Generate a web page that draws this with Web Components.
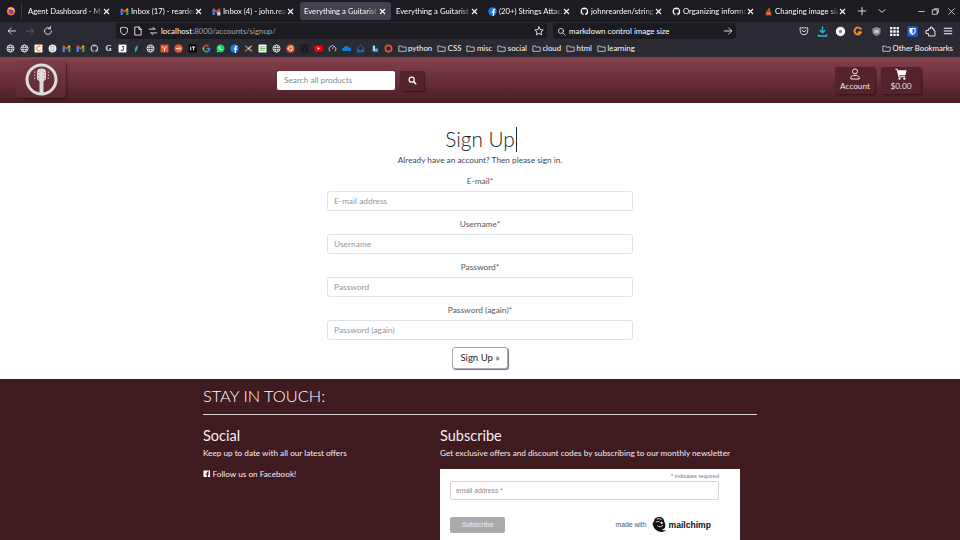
<!DOCTYPE html>
<html lang="en"><head><meta charset="utf-8"><title>Sign Up</title>
<style>
html,body{margin:0;padding:0;width:960px;height:540px;overflow:hidden;background:#fff}
body{font-family:Lato,"Noto Sans",sans-serif}
</style></head><body>
<browser-frame></browser-frame>
<site-header></site-header>
<signup-page></signup-page>
<site-footer></site-footer>
<script>
const GH='M8 1a7 7 0 0 0-2.200 13.600c.4 0 .5-.1.5-.3v-1.400c-2 .4-2.400-.9-2.400-.9-.3-.8-.8-1-.8-1-.6-.4 0-.4 0-.4.7 0 1.100.7 1.100.7.600 1.100 1.600.8 2 .6 0-.5.200-.8.400-1-1.600-.2-3.200-.8-3.200-3.400 0-.8.300-1.400.700-1.900-.100-.2-.300-.9.100-1.900 0 0 .600-.2 1.900.7a6.500 6.500 0 0 1 3.500 0c1.300-.9 1.900-.7 1.900-.7.400 1 .100 1.700.100 1.900.400.500.700 1.100.700 1.900 0 2.700-1.600 3.200-3.200 3.400.300.200.500.700.500 1.300v2c0 .200.100.300.500.300A7 7 0 0 0 8 1z';
const ICONS={
globe:'<circle cx="8" cy="8" r="6.300" fill="none" stroke="#fbfbfe" stroke-width="1.400"/><ellipse cx="8" cy="8" rx="2.800" ry="6.300" fill="none" stroke="#fbfbfe" stroke-width="1.200"/><path d="M2 6h12M2 10h12" stroke="#fbfbfe" stroke-width="1.200"/>',
gmail:'<path d="M1 14V4l2-1.500 2 1.500v10z" fill="#4285f4"/><path d="M11 14V4l2-1.500L15 4v10z" fill="#34a853"/><path d="M1 4l2-2 5 4 5-4 2 2-7 6z" fill="#ea4335"/><path d="M13 2l2 2-4 3V4z" fill="#fbbc04"/>',
gmail2:'<path d="M1 14V4l2-1.500 2 1.500v10z" fill="#4285f4"/><path d="M1 4l2-2 5 4 5-4 2 2-7 6z" fill="#ea4335"/><path d="M11 14V7l4-3v4z" fill="#34a853"/><rect x="9" y="9" width="6" height="6" fill="#ccd"/>',
ghw:`<path d="${GH}" fill="#fbfbfe"/>`,
ghg:`<path d="${GH}" fill="#bbb"/>`,
fb:'<circle cx="8" cy="8" r="7.500" fill="#1a78e8"/><path d="M10.800 16V10h1.700l.3-2.200h-2V6.500c0-.7.200-1.100 1.100-1.100h1V3.300c-1.900-.3-4.300-.4-4.400 2.800v1.700H6.800V10h1.700v6z" fill="#fff"/>',
ff:'<circle cx="8" cy="8.500" r="6.500" fill="#ff7139"/><circle cx="8.500" cy="9" r="3.600" fill="#7b3fd0"/><path d="M3 3c1 2 3 2 5 2s5 2 5.500 5c.8-3-.8-7-5-8-2 0-4 .5-5.500 1z" fill="#ffbd4f"/>',
so:'<path d="M3 15h10V9l-2-2V3L8 1 7 5 3 9z" fill="#b5502f"/><path d="M5 11h6v1.500H5z" fill="#e0b090"/>',
cbox:'<rect x="1" y="1" width="14" height="14" fill="#fff"/><path d="M11.500 5A4 4 0 1 0 11.500 11" fill="none" stroke="#f39325" stroke-width="2.400"/>',
lc:'<circle cx="8" cy="8" r="7" fill="#e8eeee"/><path d="M5 4h6v8H5z" fill="#7fb7b5"/><path d="M6.500 5.500h3v5h-3z" fill="#fff"/>',
gn:'<text x="8" y="13" text-anchor="middle" font-family="Liberation Serif" font-weight="700" font-size="14" fill="#dfe7f5">G</text>',
j:'<rect x="1" y="1" width="14" height="14" fill="#fff"/><text x="8" y="13" text-anchor="middle" font-family="Liberation Sans" font-weight="700" font-size="12" fill="#1f3c9c">J</text>',
feather:'<rect x="2" y="1" width="12" height="14" rx="5" fill="#13303f"/><path d="M10 2C6 4 5 8 5 13l1 1c3-3 5-7 4-12z" fill="#7b93a0"/>',
y:'<rect x="1" y="1" width="14" height="14" fill="#f4511e"/><path d="M4 4l4 5 4-5M8 9v4" fill="none" stroke="#fff" stroke-width="1.500"/>',
orng:'<circle cx="8" cy="8" r="7.500" fill="#e8562a"/><path d="M4 7h3v2H4zM8 6h1.500v4H8zM10.500 6H12v4h-1.500z" fill="#fff"/>',
it:'<rect x="1" y="1" width="14" height="14" fill="#000"/><path d="M4 4.500h1.800v7H4zM7 4.500h6V6h-2.100v5.500H9.100V6H7z" fill="#fff"/>',
goog:'<path d="M14.800 8.200c0-.5 0-1-.1-1.400H8v2.700h3.800a3.300 3.300 0 0 1-1.400 2.100l2.200 1.700c1.300-1.200 2.200-3 2.200-5.100z" fill="#4285f4"/><path d="M8 15c1.900 0 3.400-.6 4.600-1.700l-2.200-1.700c-.6.400-1.400.7-2.400.7-1.800 0-3.400-1.300-3.900-2.900L1.800 11.100A7 7 0 0 0 8 15z" fill="#34a853"/><path d="M4.100 9.400a4.200 4.200 0 0 1 0-2.800L1.800 4.900a7 7 0 0 0 0 6.200z" fill="#fbbc04"/><path d="M8 3.800c1 0 1.900.4 2.700 1l2-2A7 7 0 0 0 1.800 4.900l2.300 1.700C4.600 5 6.200 3.800 8 3.800z" fill="#ea4335"/>',
wa:'<path d="M1 15l1-3.700A7 7 0 1 1 4.800 14z" fill="#25d366"/><path d="M5.500 4.500c-1 1-1 2.700.7 4.600 1.800 2 3.600 2.500 4.700 1.600.5-.4.700-1 .5-1.300L10 9c-.4.500-.7.700-1.100.5C8 9 7 8 6.600 7c-.1-.4.200-.7.600-1L6.600 4.500c-.3-.3-.8-.3-1.100 0z" fill="#fff"/>',
joom:'<path d="M2 3l6 5" stroke="#5091cd" stroke-width="2.500"/><path d="M14 3L8 8" stroke="#e8a33d" stroke-width="2.500"/><path d="M14 13L8 8" stroke="#7ac143" stroke-width="2.500"/><path d="M2 13l6-5" stroke="#d9534f" stroke-width="2.500"/><circle cx="8" cy="8" r="1.500" fill="#ddd"/>',
sheet:'<rect x="1" y="1" width="14" height="14" fill="#fff"/><path d="M3 5h10M3 8h10M3 11h10" stroke="#4caf50" stroke-width="1.500"/><path d="M5 5v6" stroke="#f5a623" stroke-width="1.500"/>',
ubu:'<circle cx="8" cy="8" r="7.500" fill="#e95420"/><circle cx="8" cy="8" r="3.500" fill="none" stroke="#fff" stroke-width="1.500"/><circle cx="3.500" cy="8" r="1.100" fill="#fff"/><circle cx="10.500" cy="4" r="1.100" fill="#fff"/><circle cx="10.500" cy="12" r="1.100" fill="#fff"/>',
blk:'<rect x="1" y="1" width="14" height="14" fill="#101014"/><path d="M3 3h10v10H3zM3 7h10M8 7v6" fill="none" stroke="#33333b" stroke-width="1.200"/>',
yt:'<rect x="0.500" y="2.500" width="15" height="11" rx="3" fill="#f00"/><path d="M6.500 5.500v5l4-2.500z" fill="#fff"/>',
gauge:'<path d="M3.500 13A6 6 0 1 1 12.500 13" fill="none" stroke="#cfd3e0" stroke-width="1.500"/><path d="M8 9l1.500-4" stroke="#cfd3e0" stroke-width="1.400"/>',
od:'<path d="M3.500 12.500a3 3 0 0 1-.4-6A4.500 4.500 0 0 1 11.500 6a3.300 3.300 0 0 1 2.500 6.500z" fill="#0a84d8"/>',
mail:'<path d="M2 7l6-5 6 5v7H2z" fill="none" stroke="#1c6ab5" stroke-width="1.500"/><path d="M2 8l6 3.500L14 8v6H2z" fill="#1c6ab5"/>',
pic:'<rect x="1" y="1" width="14" height="14" fill="#0f3a55"/><path d="M5 3h4v10H5z" fill="#bcd3de"/><path d="M9 8h5v6H9z" fill="#5ea6c6"/>',
ring:'<circle cx="8" cy="8" r="5.500" fill="none" stroke="#f0501e" stroke-width="3"/>'
};
const TOOLS={
plus:'<path d="M8 2v12M2 8h12"/>',
chev:'<path d="M3 6l5 4 5-4"/>',
min:'<path d="M3 8h10"/>',
rest:'<path d="M3 5h8v8H3zM6 5V3h7v7h-2"/>',
close:'<path d="M3 3l10 10M13 3L3 13"/>',
back:'<path d="M14 8H2M7 3L2 8l5 5"/>',
fwd:'<path d="M2 8h12M9 3l5 5-5 5"/>',
reload:'<path d="M13.500 8A5.500 5.500 0 1 1 11.500 3.800M12 1v3.500H8.500"/>',
shield:'<path d="M8 2l5.500 1.500v4c0 3.500-2.500 5.500-5.500 6.500-3-1-5.500-3-5.500-6.500v-4z"/>',
page:'<path d="M3.500 1.500H10L13 5v9.500H3.500zM9.500 1.500V5.500H13"/>',
perm:'<path d="M2 5h9M8 2l3 3M14 11H5M8 14l-3-3"/>',
star:'<path d="M8 1.500l2 4.300 4.700.5-3.500 3.200 1 4.700L8 11.800l-4.200 2.400 1-4.700L1.300 6.300 6 5.800z"/>',
search:'<circle cx="7" cy="7" r="4.500"/><path d="M10.500 10.500l4 4"/>',
pocket:'<path d="M2 3h12v5a6 6 0 0 1-12 0z"/><path d="M5 7l3 2.500L11 7"/>',
dl:'<path d="M8 1.500v8M4.500 6.500L8 10l3.500-3.500M2 13v1.500h12V13" stroke-width="2"/>',
disc:'<circle cx="8" cy="8" r="6.800" fill="#fbfbfe" stroke="none"/><circle cx="8" cy="8" r="2.200" fill="#777" stroke="none"/>',
gram:'<path d="M12.500 5A5.500 5.500 0 1 0 13 10H9" stroke-width="3"/>',
sh:'<path d="M8 1.500l6 2v5c0 3-2.500 5-6 6-3.500-1-6-3-6-6v-5z" fill="#8b8b8f" stroke="none"/><path d="M5 6h6v4H5z" fill="#cfcfd2" stroke="none"/>',
grid:'<path d="M1.500 1.500h3.400v3.400H1.500zM6.300 1.500h3.400v3.400H6.300zM11.100 1.500h3.400v3.400h-3.400zM1.500 6.300h3.400v3.400H1.500zM6.300 6.300h3.400v3.400H6.300zM11.100 6.300h3.400v3.400h-3.400zM1.500 11.100h3.400v3.400H1.500zM6.300 11.100h3.400v3.400H6.300zM11.100 11.100h3.400v3.400h-3.400z" fill="#fbfbfe" stroke="none"/>',
bw:'<rect x="0.500" y="0.500" width="15" height="15" rx="1" fill="#175ddc" stroke="none"/><path d="M3.500 3h9v5.500c0 2.200-2.300 3.500-4.500 4.700C5.800 12 3.500 10.700 3.500 8.500z" fill="#fff" stroke="none"/><path d="M8 4.500h3v4c0 1.200-1.500 2.100-3 3z" fill="#175ddc" stroke="none"/>',
ext:'<path d="M2 6.500h3V4h3V1.500h2.500V4H13v3h1.500v7.500H5V11H2z"/>',
menu:'<path d="M2 3.500h12M2 8h12M2 12.500h12" stroke-width="1.700"/>'
};
function def(name,html,init){customElements.define(name,class extends HTMLElement{connectedCallback(){if(this.shadowRoot)return;const r=this.attachShadow({mode:'open'});r.innerHTML=typeof html==='function'?html(this):html;init&&init(r,this);}});}

def('fav-icon',h=>`<style>:host{display:inline-flex;width:${h.getAttribute('size')||9}px;height:${h.getAttribute('size')||9}px;flex:none}svg{width:100%;height:100%;display:block}</style><svg viewBox="0 0 16 16">${ICONS[h.getAttribute('name')]}</svg>`);

def('tool-icon',h=>`<style>:host{display:flex;align-items:center;justify-content:center;width:${h.getAttribute('w')||18}px;height:18px;flex:none}svg{width:${h.getAttribute('s')||10}px;height:${h.getAttribute('s')||10}px;display:block;fill:none;stroke:${h.getAttribute('c')||'#fbfbfe'};stroke-width:1.300;stroke-linecap:round;stroke-linejoin:round}</style><svg viewBox="0 0 16 16">${TOOLS[h.getAttribute('name')]}</svg>`);

def('browser-tab',h=>`<style>
:host{display:block;width:92px;height:18px;flex:none}
.b{display:flex;align-items:center;width:90.500px;height:18px;border-radius:3px;box-sizing:border-box;padding:0 5px 0 4px;color:#fbfbfe;font:7.700px/18px Lato,"Noto Sans",sans-serif;${h.hasAttribute('active')?'background:#42414d;':''}}
fav-icon{margin-right:2px}
.t{flex:1;min-width:0;white-space:nowrap;-webkit-mask-image:linear-gradient(90deg,#000 85%,rgba(0,0,0,.15));mask-image:linear-gradient(90deg,#000 85%,rgba(0,0,0,.15))}
svg{width:7px;height:7px;flex:none;stroke:#fbfbfe;stroke-width:1.100;margin-left:1px}
</style><div class="b">${h.hasAttribute('icon')?`<fav-icon name="${h.getAttribute('icon')}" size="9"></fav-icon>`:''}<span class="t">${h.getAttribute('label')}</span><svg viewBox="0 0 7 7"><path d="M1 1l5 5M6 1L1 6"/></svg></div>`);

def('bm-folder',h=>`<style>:host{display:flex;align-items:center;gap:1.500px;flex:none;color:#fbfbfe;font:7.800px/17px Lato,"Noto Sans",sans-serif}svg{width:9px;height:9px;fill:none;stroke:#fbfbfe;stroke-width:1.200;flex:none}</style><svg viewBox="0 0 16 16"><path d="M1.500 13V3.500h4.500l1.500 2H14.500V13z"/></svg><span>${h.textContent}</span>`);

def('browser-frame',`<style>
:host{display:block;background:#2b2a33;height:57px;overflow:hidden}
.tabs{height:22px;background:#1c1b22;display:flex;align-items:center;color:#fbfbfe}
.ff{width:21px;display:flex;justify-content:center;flex:none}
.sep{width:1px;height:16px;background:#3a3944;margin-right:2px;flex:none}
.list{display:flex;flex:none;width:828px}
.nav{height:18px;display:flex;align-items:center;padding-left:3px}
.url,.srch{height:16px;background:#1c1b22;border-radius:3px;display:flex;align-items:center;color:#fbfbfe;font:7.900px/16px Lato,"Noto Sans",sans-serif;flex:none;box-sizing:border-box}
.url{width:431px;margin-left:59px}
.url .h{margin-left:1px}.url i{font-style:normal;color:#a5a4ad}
.srch{width:183px;margin-left:6px}
.grow{flex:1}
.bm{height:17px;display:flex;align-items:center;padding-left:5.500px;gap:0 5px}
.right{display:flex;margin-left:59px}
</style>
<div class="tabs"><div class="ff"><fav-icon name="ff" size="10"></fav-icon></div><div class="sep"></div>
<div class="list">
<browser-tab label="Agent Dashboard - My"></browser-tab>
<browser-tab icon="gmail" label="Inbox (17) - rearden"></browser-tab>
<browser-tab icon="gmail2" label="Inbox (4) - john.rear"></browser-tab>
<browser-tab active label="Everything a Guitarist"></browser-tab>
<browser-tab label="Everything a Guitarist"></browser-tab>
<browser-tab icon="fb" label="(20+) Strings Attacl"></browser-tab>
<browser-tab icon="ghw" label="johnrearden/string"></browser-tab>
<browser-tab icon="ghw" label="Organizing informa"></browser-tab>
<browser-tab icon="so" label="Changing image siz"></browser-tab>
</div>
<tool-icon name="plus" w="20"></tool-icon>
<tool-icon name="chev" w="20"></tool-icon>
<span style="width:28px"></span>
<tool-icon name="min" w="14" s="9"></tool-icon>
<tool-icon name="rest" w="14" s="9"></tool-icon>
<tool-icon name="close" w="18" s="9"></tool-icon>
</div>
<div class="nav">
<tool-icon name="back"></tool-icon>
<tool-icon name="fwd" c="#6a6973"></tool-icon>
<tool-icon name="reload"></tool-icon>
<div class="url">
<tool-icon name="shield" w="15"></tool-icon>
<tool-icon name="page" w="14"></tool-icon>
<tool-icon name="perm" w="15"></tool-icon>
<span class="h"><b style="font-weight:400;color:#fff">localhost</b><i>:8000/accounts/signup/</i></span>
<span class="grow"></span>
<tool-icon name="star" w="14"></tool-icon><span style="width:1px"></span>
</div>
<div class="srch"><tool-icon name="search" w="16" s="9"></tool-icon><span>markdown control image size</span><span class="grow"></span><tool-icon name="fwd" w="16"></tool-icon></div>
<div class="right">
<tool-icon name="pocket"></tool-icon>
<tool-icon name="dl" c="#31b8d9" s="11"></tool-icon>
<tool-icon name="disc" s="11"></tool-icon>
<tool-icon name="gram" c="#f18a2b" s="10"></tool-icon>
<tool-icon name="sh" s="11"></tool-icon>
<tool-icon name="grid" s="11"></tool-icon>
<tool-icon name="bw" s="11"></tool-icon>
<tool-icon name="ext" s="11"></tool-icon>
<tool-icon name="menu"></tool-icon>
</div>
</div>
<div class="bm" id="bm"></div>`,r=>{
const names=['globe','globe','cbox','lc','gmail','gmail','ghg','gn','j','feather','globe','y','orng','it','goog','wa','fb','joom','sheet','globe','ubu','blk','yt','gauge','od','mail','pic','ring'];
r.getElementById('bm').innerHTML=names.map(n=>`<fav-icon name="${n}" size="9"></fav-icon>`).join('')+['python','CSS','misc','social','cloud','html','learning'].map(t=>`<bm-folder>${t}</bm-folder>`).join('')+`<span class="grow"></span><bm-folder>Other Bookmarks</bm-folder><span style="width:2px"></span>`;
});

def('site-header',`<style>
:host{display:grid;grid-template-columns:277px 1fr auto;align-items:center;height:46px;background:linear-gradient(#85414c,#4b1d26);font-family:Lato,"Noto Sans",sans-serif;color:#fff}
.logo{width:50px;height:37px;margin:0 0 1px 16px;border-radius:3px;background:linear-gradient(#7a3a45,#5a2730);box-shadow:1px 1px 2px rgba(30,0,0,.55);display:flex;align-items:center;justify-content:center}
.logo svg{width:33px;height:33px}
.s{display:flex;gap:5px;align-items:center;margin-top:1px}
.inp{width:118px;height:19px;background:#fff;border-radius:2px;box-sizing:border-box;padding-left:7px;font-size:8.250px;line-height:19px;color:#858b92}
.btn{background:#54232c;border-radius:2px;box-shadow:1px 1px 2px rgba(30,0,0,.6);display:flex;flex-direction:column;align-items:center;justify-content:center}
.sb{width:24px;height:20px}
.sb svg{width:9px;height:9px}
.acts{display:flex;gap:6px;padding-right:39px}
.a{width:40px;height:27px;box-sizing:border-box;padding-bottom:1px;font-size:8.200px;line-height:10px;color:#f1e6e8}
.a svg{width:12px;height:12px;margin-bottom:1px;display:block}
</style>
<div class="logo"><svg viewBox="0 0 33 33"><circle cx="16.500" cy="16.500" r="14.500" fill="none" stroke="#dcdcdc" stroke-width="3"/><path d="M14.500 31V18.500L12 16V8.500C12 6.500 14 5.500 16.500 5.500S21 6.500 21 8.500V16L18.500 18.500V31z" fill="#dcdcdc"/><path d="M9 8.500h1.300v1.300H9zM9 11.500h1.300v1.300H9zM9 14.500h1.300v1.300H9zM22.700 8.500H24v1.300h-1.300zM22.700 11.500H24v1.300h-1.300zM22.700 14.500H24v1.300h-1.300z" fill="#c9b8b8"/><path d="M13 9h1.200v1H13zM13 12h1.200v1H13zM13 15h1.200v1H13zM18.800 9H20v1h-1.200zM18.800 12H20v1h-1.200zM18.800 15H20v1h-1.200z" fill="#a08a8a"/></svg></div>
<div class="s"><div class="inp">Search all products</div><div class="btn sb"><svg viewBox="0 0 16 16"><circle cx="6.500" cy="6.500" r="4.500" fill="none" stroke="#fff" stroke-width="2.200"/><path d="M10 10l4.500 4.500" stroke="#fff" stroke-width="2.600"/></svg></div></div>
<div class="acts">
<div class="btn a"><svg viewBox="0 0 16 16" fill="none" stroke="#f1e6e8" stroke-width="1.300"><circle cx="8" cy="4.500" r="3.300"/><path d="M2.500 14.700v-1.500c0-2 1.500-3.200 3.200-3.200h4.600c1.700 0 3.200 1.200 3.200 3.200v1.500z"/></svg>Account</div>
<div class="btn a"><svg viewBox="0 0 16 16" fill="#fff"><path d="M.5 1h2.800l.5 2H15.500l-1.700 6.500H5.500l.4 1.500H13.500v1.300H4.800L2.300 2.300H.5z"/><circle cx="6" cy="14.300" r="1.500"/><circle cx="12.500" cy="14.300" r="1.500"/></svg>$0.00</div>
</div>`);

def('form-field',h=>`<style>:host{display:block;height:43px;text-align:center;font-size:8.400px;color:#54585d}
.l{height:15px;line-height:10px}
.i{height:20px;border:1px solid #dee2e6;border-radius:3px;box-sizing:border-box;text-align:left;padding-left:6px;line-height:18px;color:#92979d}</style><div class="l">${h.getAttribute('label')}*</div><div class="i">${h.getAttribute('ph')}</div>`);

def('signup-page',`<style>
:host{display:flex;flex-direction:column;align-items:center;height:276px;background:#fff;font-family:Lato,"Noto Sans",sans-serif;box-sizing:border-box;padding-top:22px}
h1{margin:0;font-weight:300;font-size:20.800px;line-height:28px;height:28px;color:#22262a;white-space:nowrap}
.c{display:inline-block;width:1px;height:25px;background:#1e2a33;vertical-align:-5px;margin-right:-2px;margin-left:1px}
p{margin:0;font-size:8.250px;line-height:14px;color:#44484d}
form{width:306px;margin-top:9px;display:flex;flex-direction:column}
.b{align-self:center;width:56px;height:22px;box-sizing:border-box;margin-top:-1px;border:1px solid #a8a8a8;border-radius:3px;box-shadow:1px 1px 1px #777;background:#fff;font-size:9.600px;line-height:20px;text-align:center;color:#2f2528}
</style>
<h1>Sign Up<span class="c"></span></h1>
<p>Already have an account? Then please sign in.</p>
<form>
<form-field label="E-mail" ph="E-mail address"></form-field>
<form-field label="Username" ph="Username"></form-field>
<form-field label="Password" ph="Password"></form-field>
<form-field label="Password (again)" ph="Password (again)"></form-field>
<div class="b">Sign Up »</div>
</form>`);

def('mc-embed',`<style>
:host{display:block;width:300px;height:71px;background:#fff;box-sizing:border-box;padding:3px 21px 0 10px;font-family:"Liberation Sans",Arial,sans-serif;overflow:hidden}
.r{text-align:right;font-size:5.600px;line-height:8px;color:#777}.r b{color:#e85c41;font-weight:400}
.i{height:19px;border:1px solid #d4d4d4;border-radius:2px;box-sizing:border-box;padding-left:5px;font-size:6.800px;line-height:17px;color:#8a8a8a;margin-top:1px}
.f{display:flex;align-items:center;margin-top:16px}
.s{width:55px;height:16px;background:#aaa;border-radius:2px;color:#eee;font-size:7.200px;line-height:16px;text-align:center}
.g{flex:1}
.m{font-size:6.800px;color:#555}
svg{width:17px;height:17px;margin-left:5px}
.n{font:700 8.600px/16px "Liberation Sans",Arial,sans-serif;color:#111;margin-right:8px}
</style>
<div class="r"><b>*</b> indicates required</div>
<div class="i">email address *</div>
<div class="f"><div class="s">Subscribe</div><div class="g"></div><span class="m">made with</span>
<svg viewBox="0 0 16 16"><path d="M7.500 1C4 1.500 3 3 3 5c-1.500 1-2 3-.8 4.500C3 12.500 6 15 10 15c2 0 3.500-.8 4-2-1.500.5-3 .5-4-.3 2 0 3.500-1.300 3.500-3.700 0-1.500-.5-2.500-1-3.500C12.500 3 10.500 1 7.500 1z" fill="#111"/><path d="M5.500 3c1.500-.8 3-.5 4.500.5M4.500 6c1-1 2.500-1 3.500-.5M6 9c1.500 1.500 4 1.500 5.500-.5" fill="none" stroke="#fff" stroke-width=".8"/><circle cx="10" cy="6.500" r="1" fill="#fff"/></svg>
<span class="n">mailchimp</span></div>`);

def('site-footer',`<style>
:host{display:block;height:161px;overflow:hidden;background:#3f1b20;color:#f5eeee;font-family:Lato,"Noto Sans",sans-serif;box-sizing:border-box;padding:7px 203px 0}
h2{margin:0;font-weight:300;font-size:16.400px;line-height:20px;height:28px;border-bottom:1px solid #d8d0d0;color:#fff}
.cols{display:grid;grid-template-columns:237px 1fr;padding-top:11px}
h3{margin:0;font-weight:400;font-size:14.500px;line-height:19px}
p{margin:2px 0 0;font-size:8.200px;line-height:12px}
.fb{display:flex;align-items:center;gap:2px;margin-top:8.500px}
.fb svg{width:7.500px;height:7.500px}
mc-embed{margin-top:10px}
</style>
<h2>STAY IN TOUCH:</h2>
<div class="cols">
<div><h3>Social</h3><p>Keep up to date with all our latest offers</p>
<p class="fb"><svg viewBox="0 0 16 16"><path d="M1 1h14v14h-4.500V10H12.500l.3-2.300H10.500V6.200c0-.7.200-1.100 1.100-1.100h1.300V3.100c-2.500-.4-4.600.1-4.600 2.700v1.900H6V10h2.300v5H1z" fill="#fff"/></svg>Follow us on Facebook!</p></div>
<div><h3>Subscribe</h3><p>Get exclusive offers and discount codes by subscribing to our monthly newsletter</p><mc-embed></mc-embed></div>
</div>`);
</script>
</body></html>
